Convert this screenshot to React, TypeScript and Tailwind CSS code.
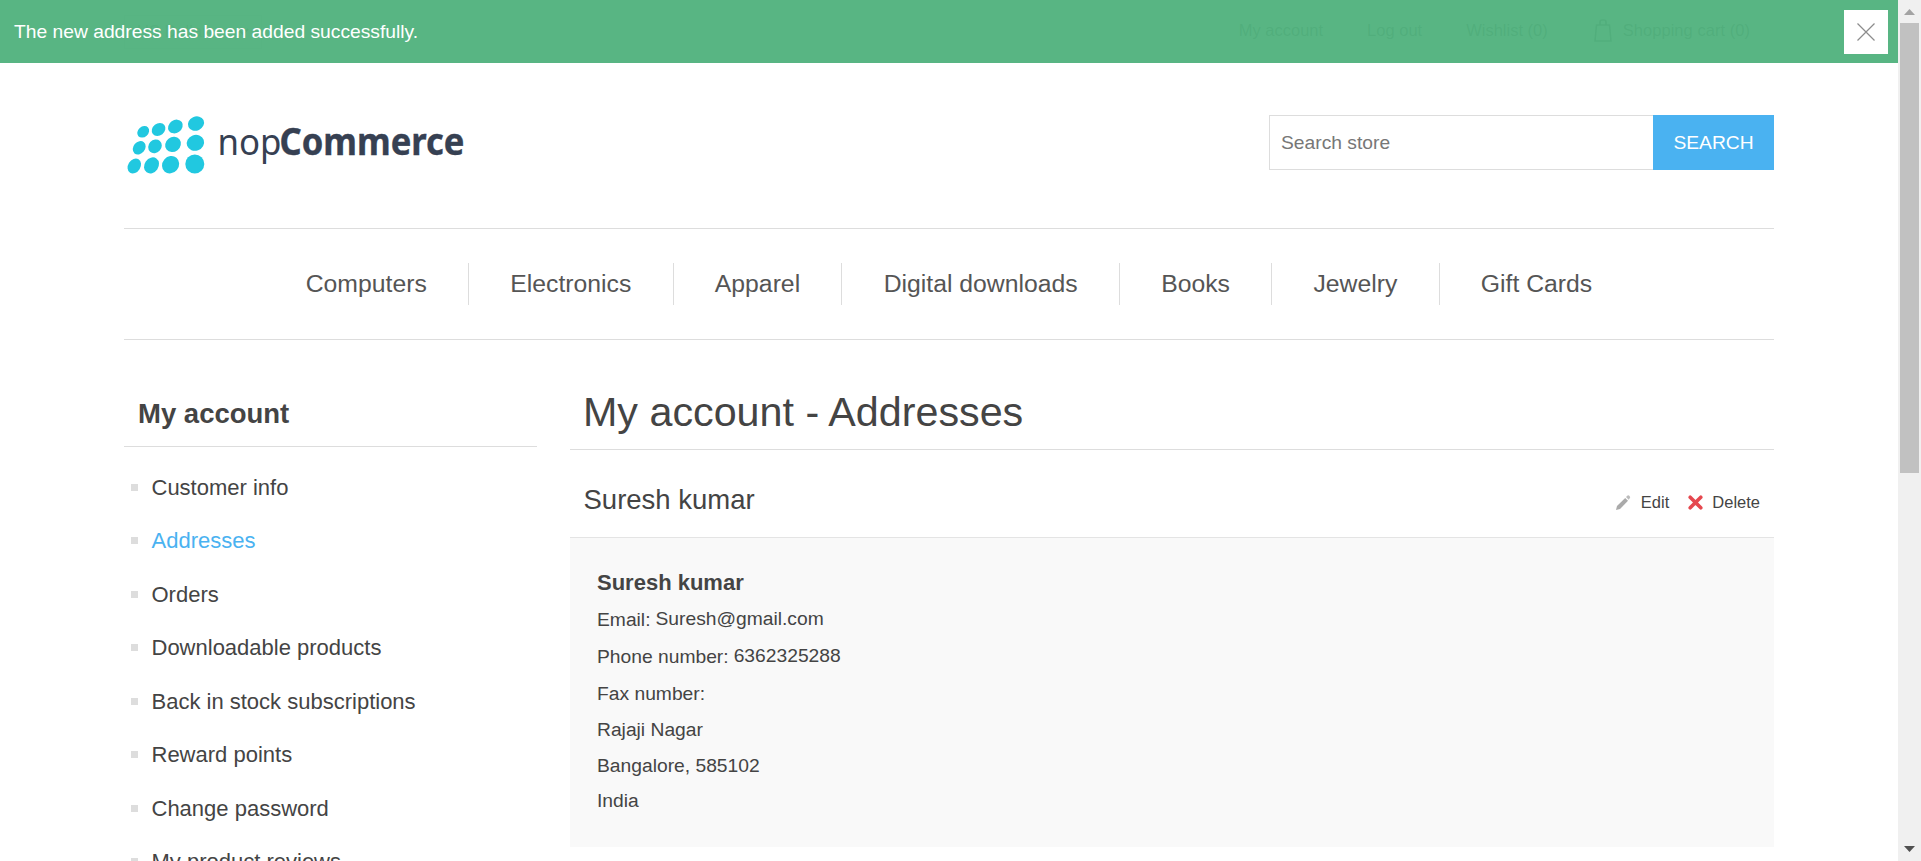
import React from "react";

const menu = ["Computers", "Electronics", "Apparel", "Digital downloads", "Books", "Jewelry", "Gift Cards"];
const links = [
  "Customer info",
  "Addresses",
  "Orders",
  "Downloadable products",
  "Back in stock subscriptions",
  "Reward points",
  "Change password",
  "My product reviews",
];

// cx, cy, rx, ry, rotation
const dots = [
  [33.2, 31.8, 6.5, 5.2, -42],
  [48.6, 29.4, 7.3, 6, -38],
  [65.4, 26.5, 7.8, 6.4, -35],
  [86, 23.6, 8.3, 7, -25],
  [29.2, 47.8, 7.3, 5.8, -50],
  [45, 46.3, 7.3, 6.4, -48],
  [63, 44.4, 8.2, 7.3, -38],
  [85.4, 42.8, 8.8, 7.9, -20],
  [24.3, 66, 8, 6.2, -58],
  [41.5, 65.4, 8.5, 7, -55],
  [60.6, 64.7, 9.1, 8.2, -50],
  [84.8, 64, 9.5, 9.4, 0],
];

function Logo() {
  return (
    <svg width="370" height="90" viewBox="0 0 370 90" className="-ml-3.5 block">
      <g fill="#21c8e0">
        {dots.map(([cx, cy, rx, ry, r], i) => (
          <ellipse key={i} cx={cx} cy={cy} rx={rx} ry={ry} transform={`rotate(${r} ${cx} ${cy})`} />
        ))}
      </g>
      <g fill="#364052" fontFamily="'Noto Sans', sans-serif">
        <text x="107.5" y="55" fontSize="36.5" fontWeight="400" textLength="64" lengthAdjust="spacingAndGlyphs">nop</text>
        <text x="169.5" y="55" fontSize="37" fontWeight="700" textLength="185" lengthAdjust="spacingAndGlyphs" stroke="#364052" strokeWidth="0.4">Commerce</text>
      </g>
    </svg>
  );
}

function Notification() {
  return (
    <div className="absolute top-0 left-0 flex h-[63px] w-[1898px] items-center justify-between bg-[#4fb17c]/95 pr-2.5 pl-[14px]">
      <p className="text-[19.25px] leading-none text-white">The new address has been added successfully.</p>
      <button className="flex size-11 items-center justify-center bg-white" aria-label="Close">
        <svg width="18" height="18" viewBox="0 0 18 18" stroke="#8c8c8c" strokeWidth="1.2">
          <path d="M.5.5l17 17M17.5.5l-17 17" />
        </svg>
      </button>
    </div>
  );
}

function Scrollbar() {
  return (
    <div className="flex h-[861px] w-[23px] shrink-0 flex-col items-center bg-[#f0f0f0]">
      <svg width="23" height="23" viewBox="0 0 23 23"><path d="M6 15h11l-5.5-6z" fill="#a3a3a3" /></svg>
      <div className="h-[450px] w-[19px] bg-[#c1c1c1]" />
      <svg width="23" height="23" viewBox="0 0 23 23" className="mt-auto"><path d="M6 8h11l-5.5 6z" fill="#505050" /></svg>
    </div>
  );
}

export default function App() {
  return (
    <div className="relative flex h-[861px] w-[1921px] overflow-hidden bg-white font-['Liberation_Sans',Arial,sans-serif] text-[#444]">
      <div className="h-[861px] w-[1898px] overflow-hidden">
        <div className="mx-auto w-[1650px]">
          <header className="flex h-[63px] items-center justify-between text-[16.5px] text-[#777]">
            <div className="flex h-[34px] w-[138px] items-center justify-between border border-[#ddd] px-3 text-[#999]">
              <span>US Dollar</span>
              <svg width="12" height="8" viewBox="0 0 12 8" fill="none" stroke="#777" strokeWidth="2"><path d="M1 1l5 5 5-5" /></svg>
            </div>
            <div className="flex items-center gap-11 pr-6 pb-0.5">
              <span>My account</span>
              <span>Log out</span>
              <span className="pr-0.5">Wishlist (0)</span>
              <span className="flex items-center gap-[11px]">
                <svg width="18" height="24" viewBox="0 0 18 24" fill="none" stroke="#777" strokeWidth="1.6"><path d="M2.5 6h13L17 22H1zM6 6V3q0-2 2-2h2q2 0 2 2v3" /></svg>
                <span className="tracking-[0.04px]">Shopping cart (0)</span>
              </span>
            </div>
          </header>

          <div className="flex h-[166px] items-start justify-between border-b border-[#ddd] pt-[37px]">
            <Logo />
            <div className="mt-[15px] flex h-[55px] w-[505px]">
              <input className="w-[384px] border border-r-0 border-[#ddd] px-[11px] pt-0.5 text-[19.25px] placeholder:text-[#777]" placeholder="Search store" />
              <button className="w-[121px] bg-[#4ab2f1] pt-0.5 text-[19.25px] text-white">SEARCH</button>
            </div>
          </div>

          <nav className="flex h-[111px] items-center justify-center border-b border-[#ddd] text-[24.75px] text-[#555]">
            {menu.map((m, i) => (
              <a key={m} className={i ? "flex h-[42px] items-center border-l border-[#ddd] px-[41.25px]" : "flex h-[42px] items-center px-[41.25px]"}>
                {m}
              </a>
            ))}
          </nav>

          <div className="flex justify-between">
            <aside className="w-[413px] pt-[41px]">
              <h2 className="flex h-[66px] items-center border-b border-[#ddd] px-3.5 text-[27.5px] font-bold">My account</h2>
              <ul className="pt-[13.6px] text-[22px]">
                {links.map((l) => (
                  <li key={l} className="flex h-[53.5px] items-center gap-[13.5px] pl-[7px]">
                    <span className="size-[7px] bg-[#ddd]" />
                    <a className={l === "Addresses" ? "text-[#4ab2f1]" : ""}>{l}</a>
                  </li>
                ))}
              </ul>
            </aside>

            <main className="w-[1204px] pt-[41px]">
              <h1 className="flex h-[69px] items-center border-b border-[#ddd] px-[13px] pb-1 text-[41.25px]">My account - Addresses</h1>
              <div className="flex h-[88px] items-center justify-between border-b border-[#e4e4e4] pr-3.5 pl-[13.5px]">
                <h2 className="pt-3 text-[27.5px]">Suresh kumar</h2>
                <div className="flex items-center gap-[19px] pt-[17px] text-[16.5px]">
                  <span className="flex items-center gap-[10px]">
                    <svg width="15" height="15" viewBox="0 0 15 15" fill="#aaa"><path d="M0 15l1-4L9.2 2.9l2.800 2.800L4 14z" /><path d="M10 2.100L11.600.5q.9-.6 1.900.4t.4 2L12.700 4.800z" fill="#bbb" /></svg>
                    Edit
                  </span>
                  <span className="flex items-center gap-[9px]">
                    <svg width="15" height="15" viewBox="0 0 15 15" stroke="#e5484f" strokeWidth="3.6" strokeLinecap="round"><path d="M2.2 2.2l10.600 10.600M12.800 2.200L2.200 12.800" /></svg>
                    Delete
                  </span>
                </div>
              </div>
              <div className="h-[309px] bg-[#f9f9f9] px-[27px] pt-[27px] text-[19.25px]">
                <p className="h-[36px] text-[22px] leading-[36px] font-bold">Suresh kumar</p>
                <p className="flex h-[37px] items-center gap-[5px]"><span className="pt-0.5">Email:</span><span>Suresh@gmail.com</span></p>
                <p className="flex h-[37px] items-center gap-[5px]"><span className="pt-0.5">Phone number:</span><span>6362325288</span></p>
                <p className="flex h-[37px] items-center pt-0.5">Fax number:</p>
                <p className="h-9 leading-9">Rajaji Nagar</p>
                <p className="h-[35px] leading-9">Bangalore, 585102</p>
                <p className="h-9 leading-9">India</p>
              </div>
            </main>
          </div>
        </div>
      </div>
      <Scrollbar />
      <Notification />
    </div>
  );
}
